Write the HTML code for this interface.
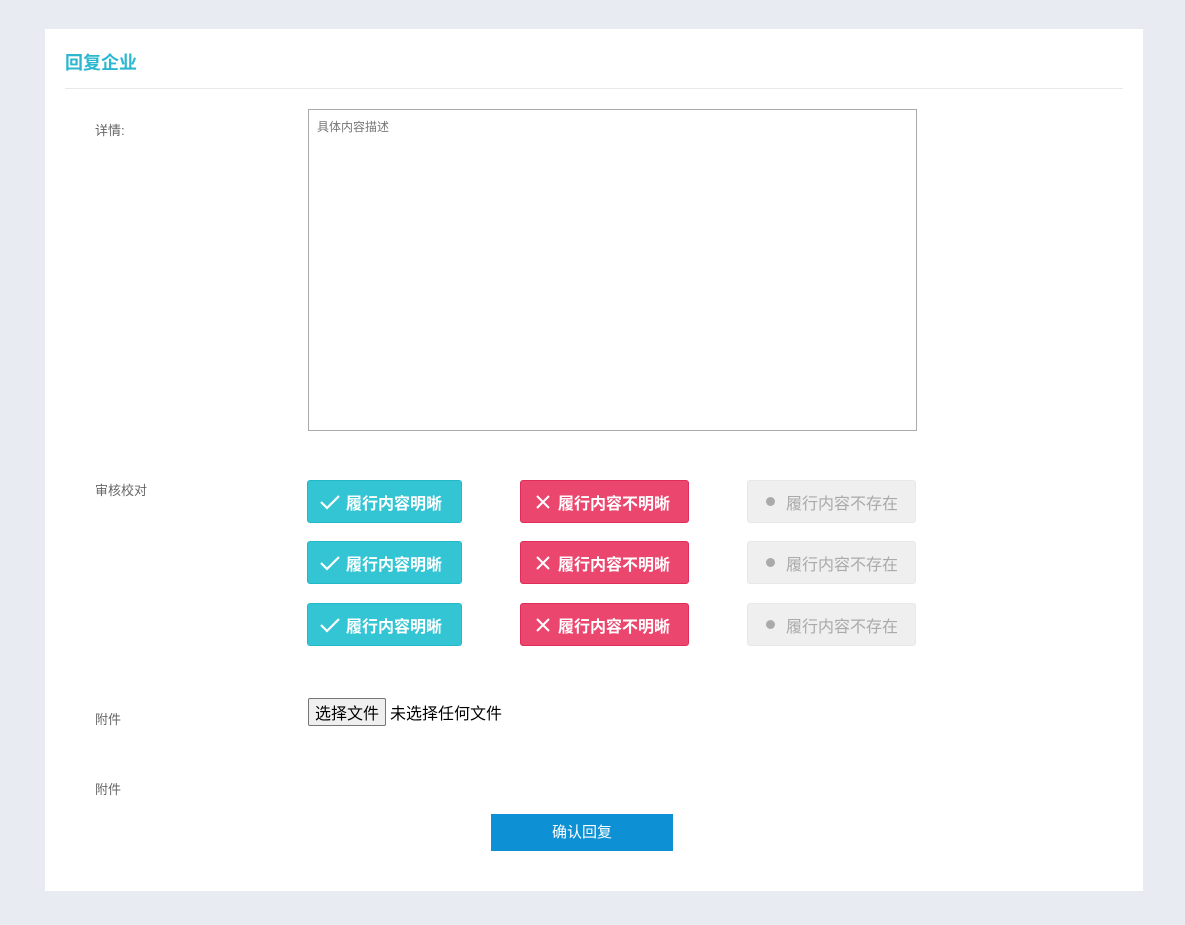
<!DOCTYPE html>
<html><head><meta charset="utf-8"><style>
body{margin:0;width:1185px;height:925px;background:#e8ebf2;font-family:"Liberation Sans","Noto Sans CJK SC",sans-serif;position:relative;overflow:hidden}
.card{position:absolute;left:45px;top:29px;width:1098px;height:862px;background:#fff}
.a{position:absolute}
.t{left:20px;top:20px;font-size:18px;font-weight:bold;color:#2bb7d0}
.hr{left:20px;top:59px;width:1058px;height:1px;background:#e8e8e8}
.lbl{font-size:13px;color:#666;left:50px}
.ta{left:263px;top:80px;width:607px;height:320px;border:1px solid #aaa}
.ta span{position:absolute;left:8px;top:8px;font-size:12px;color:#777}
.b{position:absolute;height:43px;border-radius:3px;font-size:16px;font-weight:bold;display:flex;align-items:center;box-sizing:border-box}
.g{background:#33c5d3;border:1px solid #22b8c8;color:#fff;width:155px;left:262px}
.r{background:#eb466e;border:1px solid #df2e5a;color:#fff;width:169px;left:475px}
.w{background:#efefef;border:1px solid #e8e8e8;color:#aaa;width:169px;left:702px;font-weight:normal}
.btn{left:446px;top:785px;width:182px;height:37px;background:#0e90d5;color:#fff;font-size:15px;text-align:center;line-height:37px}
</style></head><body><div class="card">
<div class="a t">回复企业</div>
<div class="a hr"></div>
<div class="a lbl" style="top:91px">详情:</div>
<div class="a ta"><span>具体内容描述</span></div>
<div class="a lbl" style="top:451px">审核校对</div>
<div class="b g" style="top:451px"><svg width="22" height="16" style="margin:0 5px 0 11px"><path d="M2 8l6 6L20 2" stroke="#fff" stroke-width="2.2" fill="none"/></svg>履行内容明晰</div>
<div class="b r" style="top:451px"><svg width="16" height="16" style="margin:0 7px 0 14px"><path d="M2 2l12 12M14 2L2 14" stroke="#fff" stroke-width="2" fill="none"/></svg>履行内容不明晰</div>
<div class="b w" style="top:451px"><span style="width:9px;height:9px;border-radius:50%;background:#aaa;margin:0 11px 0 18px"></span>履行内容不存在</div>
<div class="b g" style="top:512px"><svg width="22" height="16" style="margin:0 5px 0 11px"><path d="M2 8l6 6L20 2" stroke="#fff" stroke-width="2.2" fill="none"/></svg>履行内容明晰</div>
<div class="b r" style="top:512px"><svg width="16" height="16" style="margin:0 7px 0 14px"><path d="M2 2l12 12M14 2L2 14" stroke="#fff" stroke-width="2" fill="none"/></svg>履行内容不明晰</div>
<div class="b w" style="top:512px"><span style="width:9px;height:9px;border-radius:50%;background:#aaa;margin:0 11px 0 18px"></span>履行内容不存在</div>
<div class="b g" style="top:574px"><svg width="22" height="16" style="margin:0 5px 0 11px"><path d="M2 8l6 6L20 2" stroke="#fff" stroke-width="2.2" fill="none"/></svg>履行内容明晰</div>
<div class="b r" style="top:574px"><svg width="16" height="16" style="margin:0 7px 0 14px"><path d="M2 2l12 12M14 2L2 14" stroke="#fff" stroke-width="2" fill="none"/></svg>履行内容不明晰</div>
<div class="b w" style="top:574px"><span style="width:9px;height:9px;border-radius:50%;background:#aaa;margin:0 11px 0 18px"></span>履行内容不存在</div>
<div class="a lbl" style="top:680px">附件</div>
<div class="a" style="left:263px;top:669px;font-size:16px;color:#000;display:flex;align-items:center"><span style="border:1px solid #767676;background:#efefef;border-radius:2px;padding:1px 6px;margin-right:4px">选择文件</span>未选择任何文件</div>
<div class="a lbl" style="top:750px">附件</div>
<div class="a btn">确认回复</div>
</div></body></html>
